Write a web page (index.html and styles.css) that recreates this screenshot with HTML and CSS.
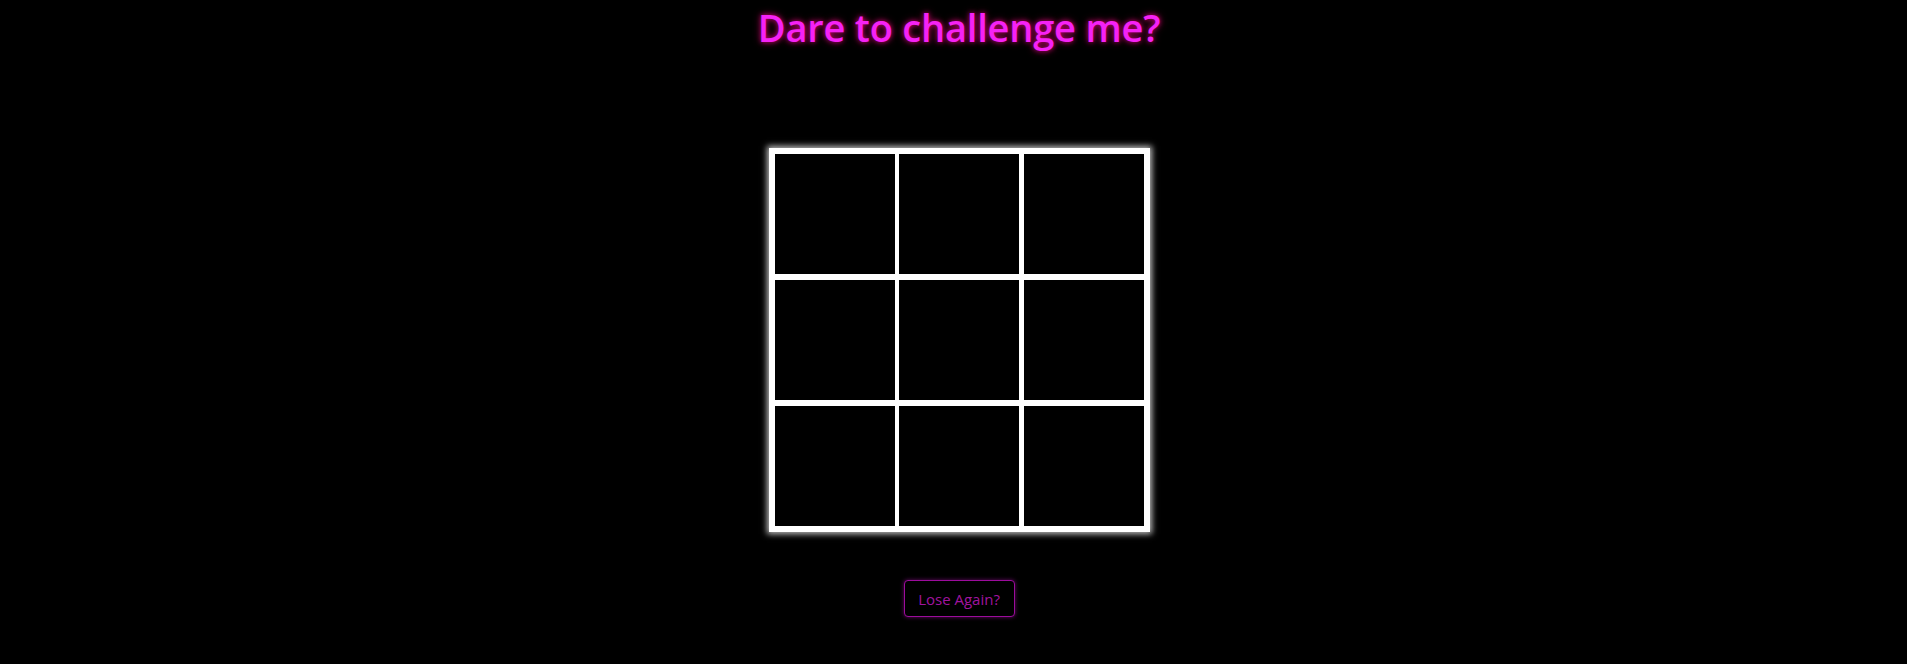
FILE: index.html
```html
<!DOCTYPE html>
<html lang="en">
<head>
<meta charset="utf-8">
<title>Tic Tac Toe</title>
<link rel="stylesheet" href="styles.css">
</head>
<body>
<main class="page">
  <h1 class="title">Dare to challenge me?</h1>
  <div class="board">
    <div class="cell"></div>
    <div class="cell"></div>
    <div class="cell"></div>
    <div class="cell"></div>
    <div class="cell"></div>
    <div class="cell"></div>
    <div class="cell"></div>
    <div class="cell"></div>
    <div class="cell"></div>
  </div>
  <button class="restart">Lose Again?</button>
</main>
</body>
</html>
```

FILE: styles.css
```css
html, body {
  margin: 0;
  padding: 0;
  background: #000;
  height: 100%;
}

body {
  font-family: "Open Sans", "Noto Sans", sans-serif;
  overflow: hidden;
}

.page {
  display: flex;
  flex-direction: column;
  align-items: center;
  padding-left: 11px;
}

.title {
  margin: 0;
  padding-top: 2px;
  font-size: 38px;
  font-weight: 600;
  line-height: 50px;
  color: #f522f5;
  text-shadow: 0 0 5px #c0006a, 0 0 9px rgba(220, 20, 110, 0.5);
  letter-spacing: -0.2px;
}

.board {
  margin-top: 96px;
  display: grid;
  grid-template-columns: repeat(3, 120px);
  grid-template-rows: repeat(3, 120px);
  column-gap: 4.5px;
  row-gap: 6px;
  padding: 6px;
  background: #fff;
  box-shadow: 0 0 6px 2px rgba(255, 255, 255, 0.75);
}

.cell {
  background: #000;
}

.restart {
  margin-top: 48px;
  width: 111px;
  height: 37px;
  background: #000;
  color: #a0149f;
  border: 1px solid #9c0c9c;
  border-radius: 4px;
  font-family: "Open Sans", "Noto Sans", sans-serif;
  font-size: 15px;
  padding: 0;
  box-shadow: 0 0 4px rgba(200, 20, 200, 0.5);
  cursor: pointer;
}
```
